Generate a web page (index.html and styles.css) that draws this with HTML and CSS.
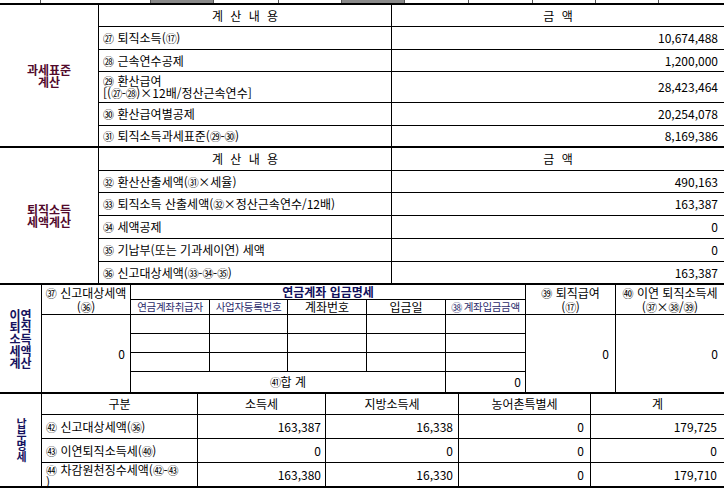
FILE: index.html
```html
<!DOCTYPE html>
<html lang="ko">
<head>
<meta charset="utf-8">
<link rel="stylesheet" href="styles.css">
</head>
<body>
<div class="page">
  <div class="strip">
    <span class="s w40"></span>
    <span class="s w110"></span>
    <span class="s g w63"></span>
    <span class="s w65"></span>
    <span class="s w63"></span>
    <span class="s g w63"></span>
    <span class="s w64"></span>
    <span class="s w64"></span>
    <span class="s w63"></span>
    <span class="s w63"></span>
    <span class="s fill"></span>
  </div>

  <div class="sec sec1">
    <div class="c label lab-r r-all1">과세표준<br>계산</div>
    <div class="c ctr"><span class="sp">계 산 내 용</span></div>
    <div class="c ctr"><span class="sp">금 액</span></div>
    <div class="c txt"><span class="n g">㉗</span>퇴직소득(<span class="n">⑰</span>)</div>
    <div class="c num">10,674,488</div>
    <div class="c txt"><span class="n g">㉘</span>근속연수공제</div>
    <div class="c num">1,200,000</div>
    <div class="c txt two"><span><span class="n g">㉙</span>환산급여<br>[(<span class="n">㉗</span>-<span class="n">㉘</span>)×12배/정산근속연수]</span></div>
    <div class="c num">28,423,464</div>
    <div class="c txt"><span class="n g">㉚</span>환산급여별공제</div>
    <div class="c num">20,254,078</div>
    <div class="c txt"><span class="n g">㉛</span>퇴직소득과세표준(<span class="n">㉙</span>-<span class="n">㉚</span>)</div>
    <div class="c num">8,169,386</div>
  </div>

  <div class="sec sec2">
    <div class="c label lab-r r-all2">퇴직소득<br>세액계산</div>
    <div class="c ctr"><span class="sp">계 산 내 용</span></div>
    <div class="c ctr"><span class="sp">금 액</span></div>
    <div class="c txt"><span class="n g">㉜</span>환산산출세액(<span class="n">㉛</span>×세율)</div>
    <div class="c num">490,163</div>
    <div class="c txt"><span class="n g">㉝</span>퇴직소득 산출세액(<span class="n">㉜</span>×정산근속연수/12배)</div>
    <div class="c num">163,387</div>
    <div class="c txt"><span class="n g">㉞</span>세액공제</div>
    <div class="c num">0</div>
    <div class="c txt"><span class="n g">㉟</span>기납부(또는 기과세이연) 세액</div>
    <div class="c num">0</div>
    <div class="c txt"><span class="n g">㊱</span>신고대상세액(<span class="n">㉝</span>-<span class="n">㉞</span>-<span class="n">㉟</span>)</div>
    <div class="c num">163,387</div>
  </div>

  <div class="sec sec3">
    <div class="c label lab-b stack s3-label">이연<br>퇴직<br>소득<br>세액<br>계산</div>
    <div class="c hdr2 s3-h1"><span><span class="n g">㊲</span>신고대상세액<br>(<span class="n">㊱</span>)</span></div>
    <div class="c ctr s3-title">연금계좌 입금명세</div>
    <div class="c hdr2 s3-h7"><span><span class="n g">㊴</span>퇴직급여<br>(<span class="n">⑰</span>)</span></div>
    <div class="c hdr2 s3-h8"><span><span class="n g">㊵</span>이연 퇴직소득세<br>(<span class="n">㊲</span>×<span class="n">㊳</span>/<span class="n">㊴</span>)</span></div>
    <div class="c ctr small">연금계좌취급자</div>
    <div class="c ctr small">사업자등록번호</div>
    <div class="c ctr">계좌번호</div>
    <div class="c ctr">입금일</div>
    <div class="c ctr small"><span class="n g">㊳</span>계좌입금금액</div>
    <div class="c num s3-v1">0</div>
    <div class="c"></div><div class="c"></div><div class="c"></div><div class="c"></div><div class="c"></div>
    <div class="c num s3-v7">0</div>
    <div class="c num s3-v8">0</div>
    <div class="c"></div><div class="c"></div><div class="c"></div><div class="c"></div><div class="c"></div>
    <div class="c"></div><div class="c"></div><div class="c"></div><div class="c"></div><div class="c"></div>
    <div class="c ctr s3-sum"><span class="n">㊶</span>합 계</div>
    <div class="c num p4">0</div>
  </div>

  <div class="sec sec4">
    <div class="c label lab-b stack2 s4-label">납<br>부<br>명<br>세</div>
    <div class="c ctr">구분</div>
    <div class="c ctr">소득세</div>
    <div class="c ctr">지방소득세</div>
    <div class="c ctr">농어촌특별세</div>
    <div class="c ctr">계</div>
    <div class="c txt"><span class="n g">㊷</span>신고대상세액(<span class="n">㊱</span>)</div>
    <div class="c num p4">163,387</div>
    <div class="c num p5">16,338</div>
    <div class="c num">0</div>
    <div class="c num p7">179,725</div>
    <div class="c txt"><span class="n g">㊸</span>이연퇴직소득세(<span class="n">㊵</span>)</div>
    <div class="c num p4">0</div>
    <div class="c num p5">0</div>
    <div class="c num">0</div>
    <div class="c num p7">0</div>
    <div class="c txt two top"><span><span class="n g">㊹</span>차감원천징수세액(<span class="n">㊷</span>-<span class="n">㊸</span><br>)</span></div>
    <div class="c num p4">163,380</div>
    <div class="c num p5">16,330</div>
    <div class="c num">0</div>
    <div class="c num p7">179,710</div>
  </div>
</div>
</body>
</html>
```
FILE: styles.css
```css
html, body {
  margin: 0;
  padding: 0;
  background: #fff;
}
body {
  font-family: "Noto Sans CJK KR", "Noto Sans", sans-serif;
  font-size: 12px;
  color: #000;
}
.page {
  width: 726px;
  height: 492px;
  overflow: hidden;
}
.strip {
  display: flex;
  height: 3px;
  width: 724px;
  border-bottom: 2px solid #000;
}
.s {
  border-left: 1px solid #555;
  box-sizing: border-box;
  height: 3px;
}
.s.w40 { width: 40px; border-left: 0; }
.s.w110 { width: 110px; }
.s.w63 { width: 63px; }
.s.w64 { width: 64px; }
.s.w65 { width: 65px; }
.s.fill { flex: 1; }
.s.g { background: #8a8a8a; }

.sec {
  display: grid;
  gap: 1px;
  background: #000;
  width: 724px;
  border-bottom: 2px solid #000;
}
.sec1 {
  grid-template-columns: 98px 292px 332px;
  grid-template-rows: 21px 22px 21px 30px 22px 20px;
}
.sec2 {
  grid-template-columns: 98px 292px 332px;
  grid-template-rows: 22px 21px 22px 22px 22px 21px;
}
.sec3 {
  grid-template-columns: 41px 88px 78px 77px 78px 78px 79px 89px 108px;
  grid-template-rows: 14px 14px 18px 18px 18px 20px;
}
.sec4 {
  grid-template-columns: 41px 155px 127px 132px 131px 133px;
  grid-template-rows: 20px 23px 23px 23px;
}
.c {
  background: #fff;
  display: flex;
  align-items: center;
  line-height: 12px;
  white-space: nowrap;
}
.r-all1, .r-all2 { grid-row: 1 / 7; }
.label {
  justify-content: center;
  text-align: center;
  font-weight: bold;
  line-height: 12px;
}
.lab-r { color: #520a2c; }
.lab-b { color: #16125e; }
.ctr { justify-content: center; text-align: center; }
.sp { word-spacing: 4px; }
.txt { padding-left: 4px; }
.num {
  justify-content: flex-end;
  padding-right: 6px;
}
.p4 { padding-right: 4px; }
.p5 { padding-right: 5px; }
.p7 { padding-right: 7px; }
.n {
  font-size: 11px;
  letter-spacing: -0.5px;
}
.n.g { margin-right: 4px; }
.two { line-height: 12px; }
.top { align-items: flex-start; padding-top: 1px; }

.stack { line-height: 12px; }
.stack2 { font-size: 11px; line-height: 11px; padding-left: 2px; }
.s3-label { grid-row: 1 / 7; grid-column: 1; }
.s3-h1 { grid-row: 1 / 3; grid-column: 2; }
.s3-title {
  grid-row: 1; grid-column: 3 / 8;
  font-weight: bold;
  color: #10105c;
}
.s3-h7 { grid-row: 1 / 3; grid-column: 8; }
.s3-h8 { grid-row: 1 / 3; grid-column: 9; }
.hdr2 {
  justify-content: center;
  text-align: center;
  align-items: flex-start;
  line-height: 13px;
  padding-top: 1px;
}
.small {
  font-size: 10.5px;
  color: #2c2c6c;
  letter-spacing: -0.3px;
}
.small .n.g { margin-right: 2px; }
.s3-v1 { grid-row: 3 / 7; grid-column: 2; padding-right: 5px; }
.s3-v7 { grid-row: 3 / 7; grid-column: 8; }
.s3-v8 { grid-row: 3 / 7; grid-column: 9; }
.s3-sum { grid-column: 3 / 7; }
.s4-label { grid-row: 1 / 5; grid-column: 1; }
```
